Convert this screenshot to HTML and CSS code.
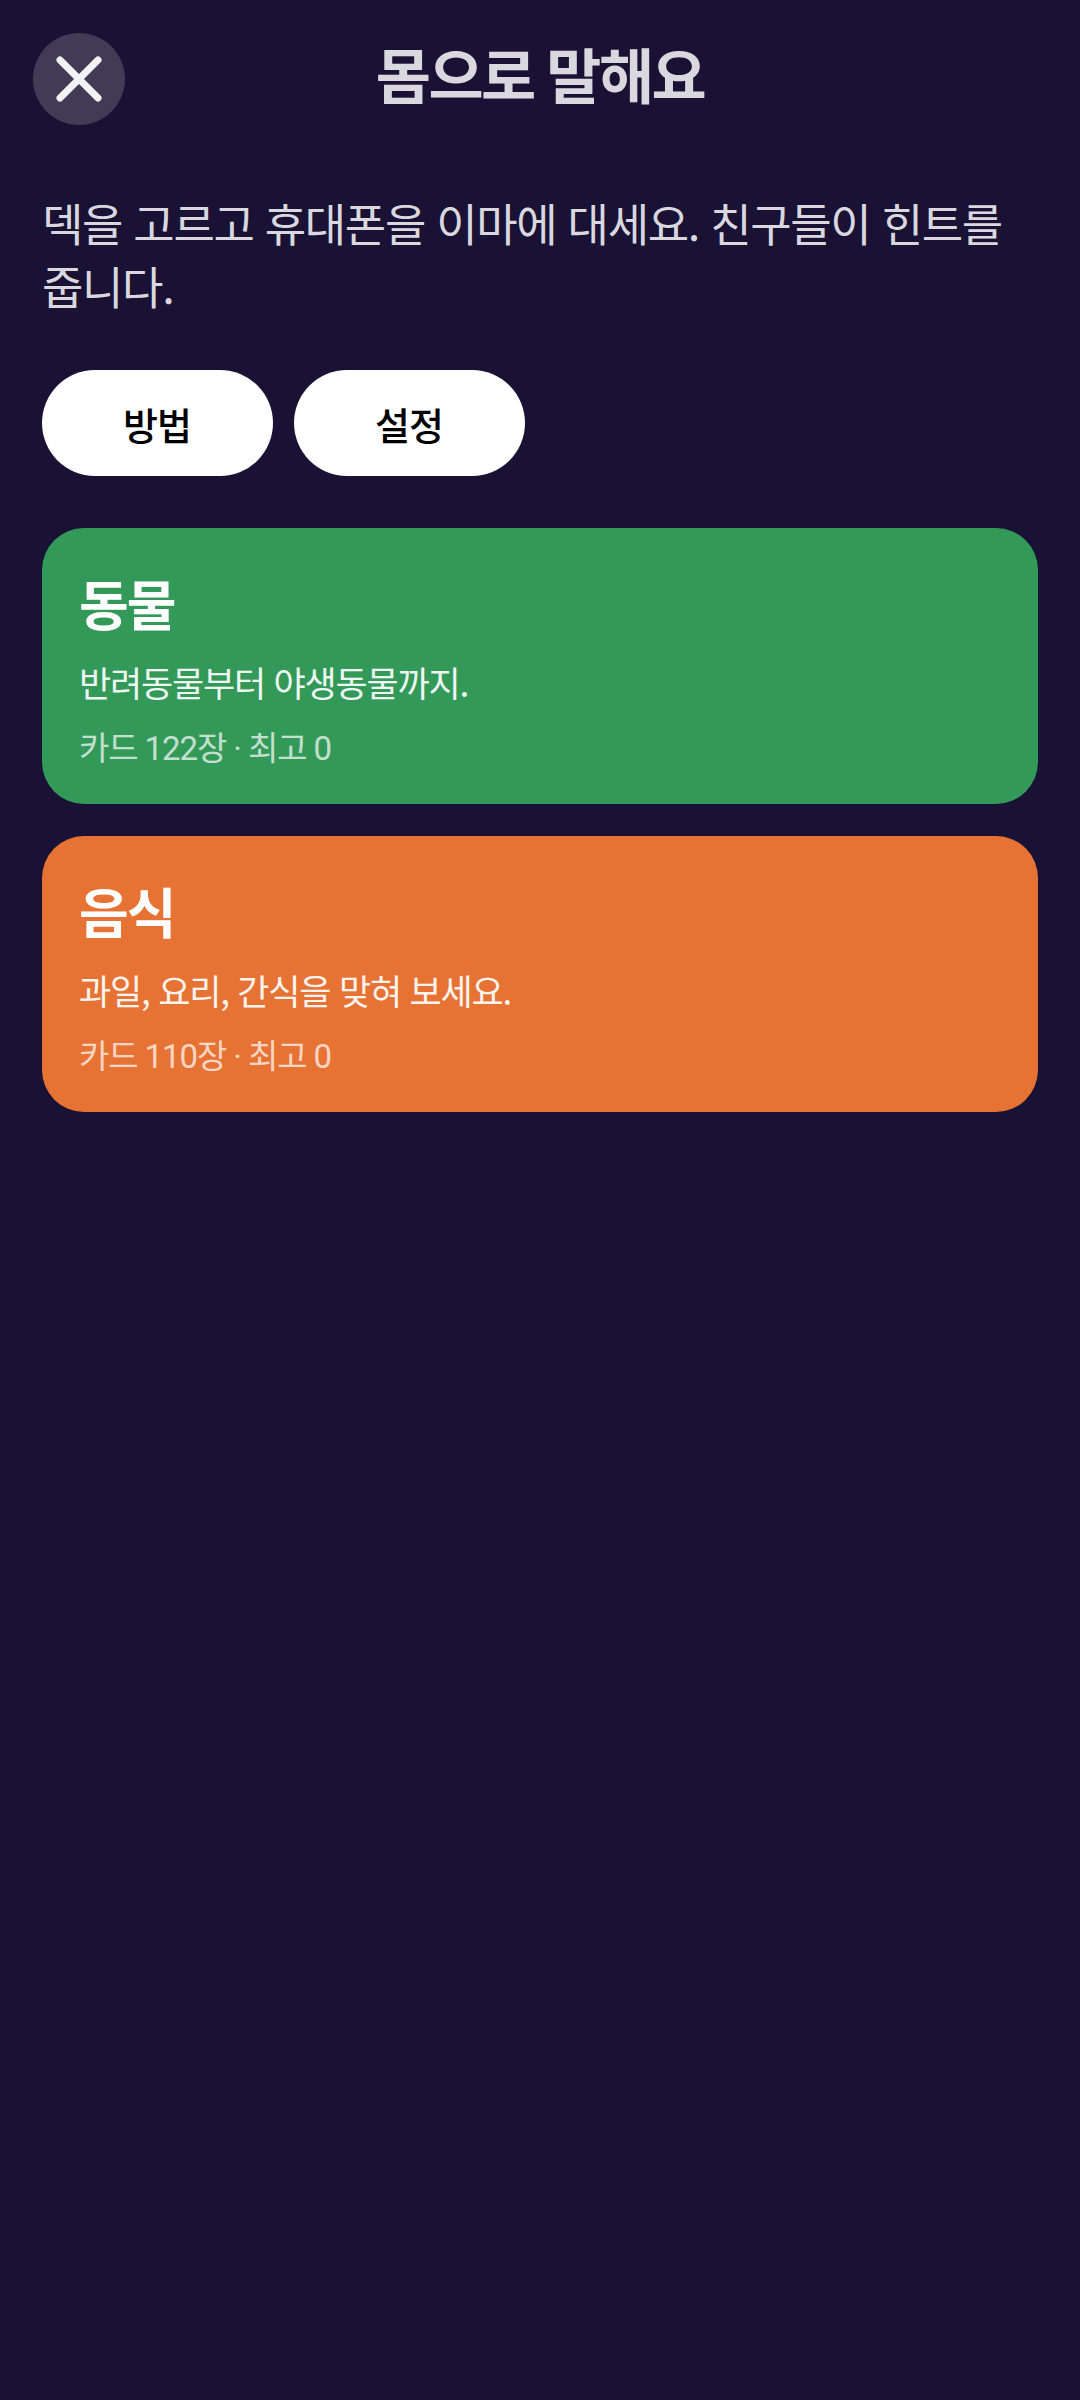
FILE: index.html
```html
<!DOCTYPE html>
<html lang="ko">
<head>
<meta charset="utf-8">
<title>몸으로 말해요</title>
<link rel="stylesheet" href="styles.css">
</head>
<body>
<div class="screen">
  <header class="topbar">
    <button class="close" aria-label="닫기">
      <svg viewBox="0 0 92 92" width="92" height="92"><path d="M27 27 L65 65 M65 27 L27 65" fill="none" stroke="#f2f2f4" stroke-width="7" stroke-linecap="round"/></svg>
    </button>
    <h1 class="title">몸으로 말해요</h1>
  </header>
  <p class="intro">덱을 고르고 휴대폰을 이마에 대세요. 친구들이 힌트를 줍니다.</p>
  <div class="actions">
    <button class="pill">방법</button>
    <button class="pill">설정</button>
  </div>
  <section class="decks">
    <article class="deck deck-green">
      <h2 class="deck-name">동물</h2>
      <p class="deck-desc">반려동물부터 야생동물까지.</p>
      <p class="deck-meta">카드 122장 · 최고 0</p>
    </article>
    <article class="deck deck-orange">
      <h2 class="deck-name">음식</h2>
      <p class="deck-desc">과일, 요리, 간식을 맞혀 보세요.</p>
      <p class="deck-meta">카드 110장 · 최고 0</p>
    </article>
  </section>
</div>
</body>
</html>
```
FILE: styles.css
```css
* { box-sizing: border-box; }
html, body { margin: 0; padding: 0; }
body {
  width: 1080px;
  height: 2400px;
  background: #1a1235;
  font-family: Roboto, "Noto Sans CJK KR", sans-serif;
  overflow: hidden;
}
.screen { padding: 33px 42px 0; }
.topbar {
  position: relative;
  height: 92px;
  display: flex;
  align-items: center;
  justify-content: center;
}
.close {
  position: absolute;
  left: -9px;
  top: 0;
  width: 92px;
  height: 92px;
  padding: 0;
  border: 0;
  border-radius: 50%;
  background: #413b56;
}
.close svg { display: block; }
.title {
  margin: 0;
  font-size: 60px;
  font-weight: 700;
  line-height: 92px;
  color: #d9d8de;
  letter-spacing: -2.5px;
}
.intro {
  margin: 66px 0 0;
  font-family: "Noto Sans CJK KR", sans-serif;
  font-size: 45px;
  font-weight: 400;
  line-height: 63px;
  letter-spacing: -1.35px;
  color: #d9d8de;
}
.actions {
  display: flex;
  gap: 21px;
  margin-top: 53px;
}
.pill {
  width: 231px;
  height: 106px;
  padding: 0 1px 0 0;
  border: 0;
  border-radius: 53px;
  background: #ffffff;
  color: #000000;
  font-family: inherit;
  font-size: 38px;
  font-weight: 500;
  letter-spacing: -1px;
}
.decks {
  display: flex;
  flex-direction: column;
  gap: 32px;
  margin-top: 52px;
}
.deck {
  height: 276px;
  padding: 47px 37px 0;
  border-radius: 42px;
  color: #ffffff;
}
.deck-green { background: #339959; }
.deck-orange { background: #e67333; }
.deck-name {
  margin: 0;
  font-size: 54px;
  font-weight: 700;
  line-height: 66px;
  letter-spacing: -2px;
}
.deck-desc {
  margin: 16px 0 0;
  font-family: "Noto Sans CJK KR", sans-serif;
  font-size: 35px;
  font-weight: 400;
  line-height: 50px;
  letter-spacing: -1.2px;
  opacity: 0.92;
}
.deck-meta {
  margin: 18px 0 0;
  font-size: 33px;
  font-weight: 400;
  line-height: 48px;
  letter-spacing: -1.1px;
  opacity: 0.7;
}
```
